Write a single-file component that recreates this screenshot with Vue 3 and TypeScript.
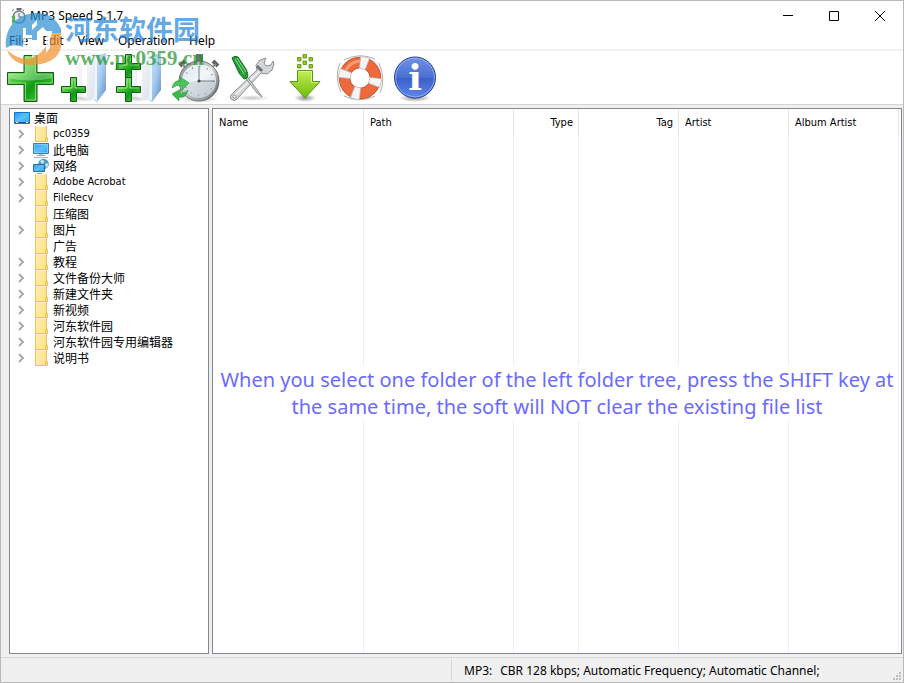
<script setup lang="ts">
import { ref } from 'vue'

type NodeIcon = 'folder' | 'computer' | 'network'

interface TreeNode {
  label: string
  icon: NodeIcon
  expandable: boolean
}

interface Column {
  label: string
  width: number
  align: 'left' | 'right'
}

const menus: string[] = ['File', 'Edit', 'View', 'Operation', 'Help']

const nodes: TreeNode[] = [
  { label: 'pc0359', icon: 'folder', expandable: true },
  { label: '此电脑', icon: 'computer', expandable: true },
  { label: '网络', icon: 'network', expandable: true },
  { label: 'Adobe Acrobat', icon: 'folder', expandable: true },
  { label: 'FileRecv', icon: 'folder', expandable: true },
  { label: '压缩图', icon: 'folder', expandable: false },
  { label: '图片', icon: 'folder', expandable: true },
  { label: '广告', icon: 'folder', expandable: false },
  { label: '教程', icon: 'folder', expandable: true },
  { label: '文件备份大师', icon: 'folder', expandable: true },
  { label: '新建文件夹', icon: 'folder', expandable: true },
  { label: '新视频', icon: 'folder', expandable: true },
  { label: '河东软件园', icon: 'folder', expandable: true },
  { label: '河东软件园专用编辑器', icon: 'folder', expandable: true },
  { label: '说明书', icon: 'folder', expandable: true },
]

const columns: Column[] = [
  { label: 'Name', width: 151, align: 'left' },
  { label: 'Path', width: 150, align: 'left' },
  { label: 'Type', width: 65, align: 'right' },
  { label: 'Tag', width: 100, align: 'right' },
  { label: 'Artist', width: 110, align: 'left' },
  { label: 'Album Artist', width: 110, align: 'left' },
]

const opened = ref<Set<string>>(new Set())

function toggle(label: string): void {
  if (opened.value.has(label)) opened.value.delete(label)
  else opened.value.add(label)
}

// Latin names are set one pixel smaller than Chinese ones.
function isLatin(label: string): boolean {
  return /^[\x20-\x7e]+$/.test(label)
}
</script>

<template>
  <div class="window">
    <svg class="defs" width="0" height="0" aria-hidden="true">
      <defs>
        <linearGradient id="plus" x1="0" y1="0" x2="1" y2="1">
          <stop offset="0" stop-color="#b4f09a" />
          <stop offset=".4" stop-color="#3fc132" />
          <stop offset=".6" stop-color="#119a16" />
          <stop offset="1" stop-color="#5ed34e" />
        </linearGradient>
        <linearGradient id="paper" x1="0" y1="0" x2="1" y2="1">
          <stop offset="0" stop-color="#fdfdfe" />
          <stop offset="1" stop-color="#dfe3ea" />
        </linearGradient>
        <linearGradient id="flap" x1="0" y1="0" x2="1" y2="1">
          <stop offset="0" stop-color="#cfe6fa" />
          <stop offset=".5" stop-color="#a9cdf0" />
          <stop offset="1" stop-color="#5c8fc8" />
        </linearGradient>
        <linearGradient id="steel" x1="0" y1="0" x2="1" y2="1">
          <stop offset="0" stop-color="#8b8f92" />
          <stop offset=".5" stop-color="#d8dadb" />
          <stop offset="1" stop-color="#4d5153" />
        </linearGradient>
        <linearGradient id="dial" x1="0" y1="0" x2="1" y2="1">
          <stop offset="0" stop-color="#dbe7ee" />
          <stop offset=".5" stop-color="#f3f6f8" />
          <stop offset="1" stop-color="#c3cdd4" />
        </linearGradient>
        <linearGradient id="lime" x1="0" y1="0" x2="0" y2="1">
          <stop offset="0" stop-color="#c4ef56" />
          <stop offset="1" stop-color="#6fb90c" />
        </linearGradient>
        <linearGradient id="info" x1="0" y1="0" x2="0" y2="1">
          <stop offset="0" stop-color="#6f92e4" />
          <stop offset=".5" stop-color="#4a6fd2" />
          <stop offset=".52" stop-color="#3a5fc9" />
          <stop offset="1" stop-color="#5f88ea" />
        </linearGradient>
        <radialGradient id="shade">
          <stop offset="0" stop-color="#000" stop-opacity=".45" />
          <stop offset="1" stop-color="#000" stop-opacity="0" />
        </radialGradient>
        <linearGradient id="screen" x1="0" y1="0" x2="1" y2="1">
          <stop offset="0" stop-color="#2b9cf0" />
          <stop offset=".5" stop-color="#5cc0fb" />
          <stop offset="1" stop-color="#2ba4f4" />
        </linearGradient>
        <linearGradient id="manila" x1="0" y1="0" x2="1" y2="0">
          <stop offset="0" stop-color="#ffedae" />
          <stop offset="1" stop-color="#fde08a" />
        </linearGradient>
      </defs>
    </svg>

    <header class="titlebar">
      <svg class="app-icon" viewBox="0 0 16 16" width="16" height="16" aria-hidden="true">
        <path d="M7 0h4v2H7zM2 3l2-1.500M14 3l-1.500-1.500" stroke="#666" stroke-width="1" fill="#777" />
        <circle cx="9" cy="9" r="6" fill="#e8edf0" stroke="#7d8386" stroke-width="1.500" />
        <path d="M9 5v4h3" fill="none" stroke="#667" />
        <path d="M1 9l4-2v5zM6 13l-4 3v-5z" fill="#43b84c" />
      </svg>
      <h1>MP3 Speed 5.1.7</h1>
      <div class="caption-buttons">
        <button type="button" aria-label="Minimize">
          <svg viewBox="0 0 10 10" width="10" height="10"><path d="M0 4.500h10" stroke="#000" /></svg>
        </button>
        <button type="button" aria-label="Maximize">
          <svg viewBox="0 0 10 10" width="10" height="10"><path d="M.5.5h9v9h-9z" fill="none" stroke="#000" /></svg>
        </button>
        <button type="button" aria-label="Close">
          <svg viewBox="0 0 10 10" width="10" height="10"><path d="M0 0l10 10M10 0L0 10" stroke="#000" /></svg>
        </button>
      </div>
    </header>

    <nav class="menubar">
      <button v-for="menu in menus" :key="menu" type="button">{{ menu }}</button>
    </nav>

    <div class="toolbar" role="toolbar">
      <button type="button" aria-label="Add files">
        <svg viewBox="0 0 55 53">
          <path d="M21 4.500h13v17h16.500v12H34v17H21v-17H4.500v-12H21z" fill="url(#plus)" stroke="#145c16" />
          <path d="M22.500 6h10v17h16.500v4q-22 5-43.500 0v-4h17z" fill="#fff" opacity=".3" />
          <path d="M22.500 6v17H6v9h16.500v17h10V32H49v-9H32.500V6z" fill="none" stroke="#a5ee8c" opacity=".7" />
        </svg>
      </button>
      <button type="button" aria-label="Add folder">
        <svg viewBox="0 0 55 53">
          <ellipse cx="24" cy="47" rx="16" ry="4" fill="url(#shade)" opacity=".5" />
          <path d="M18 5l19-3v43l-4 4-15-4z" fill="url(#paper)" />
          <path d="M24 3l5 1v42l-5-1z" fill="#fff" />
          <path d="M37 5l11-3v37l-9 12-3-2z" fill="url(#flap)" />
          <path d="M37 5l2 2v43l-3-2z" fill="#eef6fd" />
          <path d="M12.500 26.500h6v9h9v6h-9v9h-6v-9h-9v-6h9z" fill="url(#plus)" stroke="#145c16" />
          <path d="M14 28v9H5M17 28v9h9" fill="none" stroke="#c2f7ac" opacity=".7" />
        </svg>
      </button>
      <button type="button" aria-label="Add folder with subfolders">
        <svg viewBox="0 0 55 53">
          <ellipse cx="24" cy="47" rx="16" ry="4" fill="url(#shade)" opacity=".5" />
          <path d="M18 5l19-3v43l-4 4-15-4z" fill="url(#paper)" />
          <path d="M24 3l5 1v42l-5-1z" fill="#fff" />
          <path d="M37 5l11-3v37l-9 12-3-2z" fill="url(#flap)" />
          <path d="M37 5l2 2v43l-3-2z" fill="#eef6fd" />
          <g v-for="top in [3, 26]" :key="top" :transform="`translate(0 ${top})`">
            <path d="M12.500.5h6v9h9v6h-9v9h-6v-9h-9v-6h9z" fill="url(#plus)" stroke="#145c16" />
            <path d="M14 2v9H5M17 2v9h9" fill="none" stroke="#c2f7ac" opacity=".7" />
          </g>
        </svg>
      </button>
      <button type="button" aria-label="Convert">
        <svg viewBox="0 0 55 53">
          <ellipse cx="31" cy="48" rx="20" ry="4" fill="url(#shade)" opacity=".6" />
          <path d="M28 3h7v8h-7z" fill="#707476" />
          <path d="M12 15l5-5M45 10l5 5" stroke="#5f6365" stroke-width="4" />
          <path d="M14 13l5 5M43 17l5-4" stroke="#888c8e" stroke-width="2" />
          <circle cx="31" cy="30" r="18.500" fill="url(#dial)" stroke="url(#steel)" stroke-width="3" />
          <circle cx="31" cy="30" r="20" fill="none" stroke="#55595b" stroke-width=".8" />
          <circle cx="31" cy="30" r="14.500" fill="none" stroke="#77828a" stroke-width="1.500" stroke-dasharray="1 6.592" />
          <path d="M14 34q17-8 34-2a17 17 0 0 1-34 2z" fill="#aab6be" opacity=".4" />
          <path d="M31 15v15h16" fill="none" stroke="#5c666d" stroke-width=".8" />
          <circle cx="31" cy="30" r="1.500" fill="#3f484e" />
          <path d="M4 37q2-9 9-7l-1-4 9 6-7 7v-4q-5-2-10 2z" fill="#49c654" stroke="#23903a" stroke-width=".6" />
          <path d="M20 39q-2 9-9 7v4l-7-7 9-5-1 4q5 1 8-3z" fill="#3dba49" stroke="#23903a" stroke-width=".6" />
        </svg>
      </button>
      <button type="button" aria-label="Options">
        <svg viewBox="0 0 55 53">
          <ellipse cx="29" cy="47" rx="18" ry="3" fill="url(#shade)" opacity=".5" />
          <path d="M9 43l25-24-1-5 4-5 6-2-2 5 2 3 5-1 2-4 1 3-2 6-5 4-6-1L14 48q-3 3-6 0-2-3 1-5z" fill="#d3d5d6" stroke="#8c9092" />
          <path d="M12 44l26-25" stroke="#f4f4f4" stroke-width="1.500" />
          <path d="M34 15l5 5" stroke="#6f7375" stroke-width="3" />
          <circle cx="11.500" cy="45.500" r="1.500" fill="#fff" stroke="#888" />
          <path d="M23 24l12 16 4 6-5-4-13-17z" fill="#c9cccd" stroke="#7c8082" stroke-width=".8" />
          <path d="M9 7q3-3 6-1l8 12q3 6 1 9l-3 1-5-6z" fill="#269a36" stroke="#176a25" />
          <path d="M12 8l9 15M14 7l9 14" fill="none" stroke="#8ee08f" />
        </svg>
      </button>
      <button type="button" aria-label="Download">
        <svg viewBox="0 0 55 53">
          <ellipse cx="27" cy="47" rx="11" ry="4" fill="url(#shade)" />
          <g fill="#8fcc1f" stroke="#548f0d" stroke-width=".8">
            <path d="M25 3.500h3.500V7H25zM25 10h3.500v3.500H25zM19.500 6.500H23V10h-3.500zM31 6.500h3.500V10H31zM19.500 13.500H23V17h-3.500zM31 13.500h3.500V17H31z" />
          </g>
          <path d="M19.500 19.500h15v11H42L27 47 12 30.500h7.500z" fill="url(#lime)" stroke="#589a0c" />
          <path d="M20.500 20.500h13v11h6" fill="none" stroke="#e2ff91" opacity=".7" />
        </svg>
      </button>
      <button type="button" aria-label="Help">
        <svg viewBox="0 0 55 53">
          <ellipse cx="27" cy="47" rx="15" ry="3" fill="url(#shade)" opacity=".5" />
          <path d="M11 9q15-8 31-1M46 12q7 16 1 30M42 45q-15 7-31 0M8 41q-7-15-1-29" fill="none" stroke="#9a9a9a" stroke-width=".8" />
          <circle cx="27" cy="27" r="15.500" fill="none" stroke="#b8502c" stroke-width="11.500" />
          <circle cx="27" cy="27" r="15.500" fill="none" stroke="#ee6a3c" stroke-width="10" />
          <path d="M13 19q4-8 14-9" fill="none" stroke="#ffb190" stroke-width="3" opacity=".7" />
          <g transform="rotate(14 27 27)" fill="#f5f5f5" stroke="#b5b5b5" stroke-width=".6">
            <path d="M22.500 5.500h9l-1.500 12h-6z" />
            <path d="M48.500 22.500v9L36.500 30v-6z" />
            <path d="M22.500 48.500h9L30 36.500h-6z" />
            <path d="M5.500 22.500v9l12-1.500v-6z" />
          </g>
        </svg>
      </button>
      <button type="button" aria-label="About">
        <svg viewBox="0 0 55 53">
          <ellipse cx="27" cy="47" rx="16" ry="4" fill="url(#shade)" />
          <circle cx="27" cy="26.500" r="20.500" fill="url(#info)" stroke="#25408f" />
          <circle cx="27" cy="26.500" r="19.300" fill="none" stroke="#9db7f3" stroke-width=".8" />
          <text class="info-mark" x="27" y="39" text-anchor="middle">i</text>
        </svg>
      </button>
    </div>

    <main class="workspace">
      <section class="panel tree" aria-label="Folders">
        <div class="row root">
          <svg class="node-icon" viewBox="0 0 16 16" width="16" height="16" aria-hidden="true">
            <path d="M.5 2.500h15v11H.5z" fill="url(#screen)" stroke="#1673c4" />
            <path d="M1 12.500h14" stroke="#0c5fae" />
            <path d="M2 12.500h2M12 12.500h2" stroke="#fff" />
          </svg>
          <span class="label">桌面</span>
        </div>
        <ul>
          <li v-for="node in nodes" :key="node.label" class="row">
            <button
              v-if="node.expandable"
              type="button"
              class="expander"
              :class="{ open: opened.has(node.label) }"
              :aria-label="node.label"
              :aria-expanded="opened.has(node.label)"
              @click="toggle(node.label)"
            >
              <svg viewBox="0 0 12 16" width="12" height="16">
                <path d="M4 4l4 4-4 4" fill="none" stroke="#a6a6a6" stroke-width="1.800" />
              </svg>
            </button>
            <span v-else class="expander"></span>
            <svg class="node-icon" viewBox="0 0 16 16" width="16" height="16" aria-hidden="true">
              <template v-if="node.icon === 'folder'">
                <path d="M2 .5h11.500V11h1v4.500H2z" fill="url(#manila)" />
                <path d="M2.500 0v15.500M2 15.500h12.500V11.500h-2v4M13.500 0v11" fill="none" stroke="#ecc650" />
              </template>
              <template v-else-if="node.icon === 'computer'">
                <path d="M.5 1.500h15v10H.5z" fill="url(#screen)" stroke="#3a7fae" />
                <path d="M1.500 2.500h13v8h-13z" fill="none" stroke="#9adcff" opacity=".6" />
                <path d="M6 12h4v1.500H6z" fill="#b8c4cc" />
                <path d="M4 13.500h8" stroke="#8fa3b0" />
                <path d="M1 15.500h14" stroke="#a9b7c0" />
              </template>
              <template v-else>
                <circle cx="10.500" cy="6" r="5.300" fill="#4b9cc9" />
                <path d="M7 3q3-2 4 0t-2 3zM12 6l3-1v3l-2 2z" fill="#c6e3ee" />
                <path d="M.5 6.500h11v7H.5z" fill="url(#screen)" stroke="#2c6f9e" />
                <path d="M4 15.500h5" stroke="#8fa3b0" />
              </template>
            </svg>
            <span class="label" :class="{ latin: isLatin(node.label) }">{{ node.label }}</span>
          </li>
        </ul>
      </section>

      <section class="panel files" aria-label="Files">
        <table>
          <colgroup>
            <col v-for="col in columns" :key="col.label" :style="{ width: col.width + 'px' }" />
            <col />
          </colgroup>
          <thead>
            <tr>
              <th v-for="col in columns" :key="col.label" scope="col" :class="col.align">{{ col.label }}</th>
              <td></td>
            </tr>
          </thead>
          <tbody>
            <tr>
              <td v-for="col in columns" :key="col.label"></td>
              <td></td>
            </tr>
          </tbody>
        </table>
        <p class="hint">
          <span>When you select one folder of the left folder tree, press the SHIFT key at the same time, the soft will NOT clear the existing file list</span>
        </p>
      </section>
    </main>

    <footer class="statusbar">
      <div class="status-left"></div>
      <div class="status-info"><span>MP3:</span><span>CBR 128 kbps; Automatic Frequency; Automatic Channel;</span></div>
      <svg class="grip" viewBox="0 0 9 9" width="9" height="9" aria-hidden="true">
        <path d="M6 0h2v2H6zM3 3h2v2H3zM6 3h2v2H6zM0 6h2v2H0zM3 6h2v2H3zM6 6h2v2H6z" fill="#bcbcbc" />
      </svg>
    </footer>

    <div class="watermark">
      <svg viewBox="0 0 57 58" width="57" height="58" aria-hidden="true">
        <path d="M1 37C-1 15 14 2 32 2q17 0 24 16v17H47V20h-6l-3-4-6 5v21h-5V28h-9v8Q8 32 1 37z" fill="#2b8fd3" />
        <path d="M18 17h3v21h-3zM27 14l5-5v5l-5 5zM21 24h6v3h-6z" fill="#fff" />
        <path d="M56 22q5 30-28 32Q8 55 2 39q12 11 24 8 14-4 21-25z" fill="#f3902d" />
        <path d="M27 29h5v15l-5 3zM41 21h4v16l-4 5z" fill="#fff" />
      </svg>
      <div class="watermark-text">
        <span class="watermark-name">河东软件园</span>
        <span class="watermark-url">www.pc0359.cn</span>
      </div>
    </div>
  </div>
</template>

<style>
body {
  margin: 0;
}
</style>

<style scoped>
.window {
  position: relative;
  box-sizing: border-box;
  min-height: 100vh;
  display: flex;
  flex-direction: column;
  border: 1px solid #b9b9b9;
  background: #f0f0f0;
  color: #000;
  font: 12px/16px "Noto Sans", "Noto Sans CJK SC", sans-serif;
}
.defs {
  position: absolute;
}
button {
  margin: 0;
  padding: 0;
  border: 0;
  background: none;
  color: inherit;
  font: inherit;
}
.titlebar {
  display: flex;
  align-items: center;
  height: 29px;
  padding-left: 9px;
  background: #fff;
}
h1 {
  flex: 1;
  margin: 0 0 0 4px;
  font-size: 12px;
  font-weight: 400;
}
.caption-buttons {
  display: flex;
  align-self: stretch;
}
.caption-buttons button {
  display: grid;
  place-items: center;
  width: 46px;
}
.menubar {
  display: flex;
  gap: 14px;
  height: 17px;
  padding: 2px 0 0 8px;
  background: #fff;
  border-bottom: 2px solid #f0f0f0;
}
.toolbar {
  display: flex;
  height: 53px;
  padding-left: 2px;
  background: #fff;
  border-bottom: 1px solid #d5d5d5;
}
.toolbar svg {
  display: block;
  width: 55px;
  height: 53px;
}
.info-mark {
  fill: #fff;
  font: bold 36px "DejaVu Serif", serif;
}
.workspace {
  flex: 1;
  display: grid;
  grid-template-columns: 200px 1fr;
  gap: 3px;
  padding: 3px 1px 3px 8px;
}
.panel {
  border: 1px solid #828790;
  background: #fff;
  font: 11px/16px "DejaVu Sans Condensed", "Noto Sans CJK SC", sans-serif;
}
.tree {
  padding-top: 1px;
}
.tree ul {
  margin: 0;
  padding: 0;
  list-style: none;
}
.row {
  display: flex;
  height: 16px;
  padding-left: 5px;
  white-space: nowrap;
}
.row.root {
  gap: 4px;
  padding-left: 4px;
}
.label {
  font-size: 12px;
  line-height: 18px;
}
.label.latin {
  font-size: 11px;
  line-height: 16px;
}
.expander {
  display: block;
  width: 12px;
  height: 16px;
  margin-right: 6px;
}
.expander svg {
  display: block;
}
.expander.open svg {
  transform: rotate(90deg);
}
ul .node-icon {
  margin-right: 4px;
}
.files {
  position: relative;
  min-width: 0;
}
table {
  width: 100%;
  height: 100%;
  table-layout: fixed;
  border-collapse: separate;
  border-spacing: 0;
}
thead tr {
  height: 27px;
}
th {
  padding: 0 5px 0 6px;
  border-right: 1px solid #e5e5e5;
  font-weight: 400;
  text-align: left;
}
th.right {
  text-align: right;
}
td {
  padding: 0;
}
tbody td:not(:last-child) {
  border-right: 1px solid #e7f1fb;
}
.hint {
  position: absolute;
  top: 257px;
  left: 0;
  right: 0;
  margin: 0;
  text-align: center;
  color: #6a6aff;
  font: 20px/27px "Noto Sans", sans-serif;
}
.hint span {
  background: #fff;
}
.statusbar {
  position: relative;
  display: grid;
  grid-template-columns: 450px 1fr;
  height: 24px;
  border-top: 1px solid #d7d7d7;
}
.status-info {
  display: flex;
  gap: 8px;
  align-items: center;
  margin: 1px 0;
  padding: 1px 0 0 12px;
  border-left: 1px solid #d7d7d7;
}
.grip {
  position: absolute;
  right: 1px;
  bottom: 1px;
}
.watermark {
  position: absolute;
  top: 10px;
  left: 4px;
  display: flex;
  gap: 3px;
  opacity: 0.7;
  pointer-events: none;
}
.watermark-text {
  display: flex;
  flex-direction: column;
  white-space: nowrap;
}
.watermark-name {
  color: #2585da;
  font: bold 27px/35px "Noto Sans CJK SC", sans-serif;
}
.watermark-url {
  color: #219328;
  font: bold 21px/24px "Liberation Serif", serif;
}
</style>
